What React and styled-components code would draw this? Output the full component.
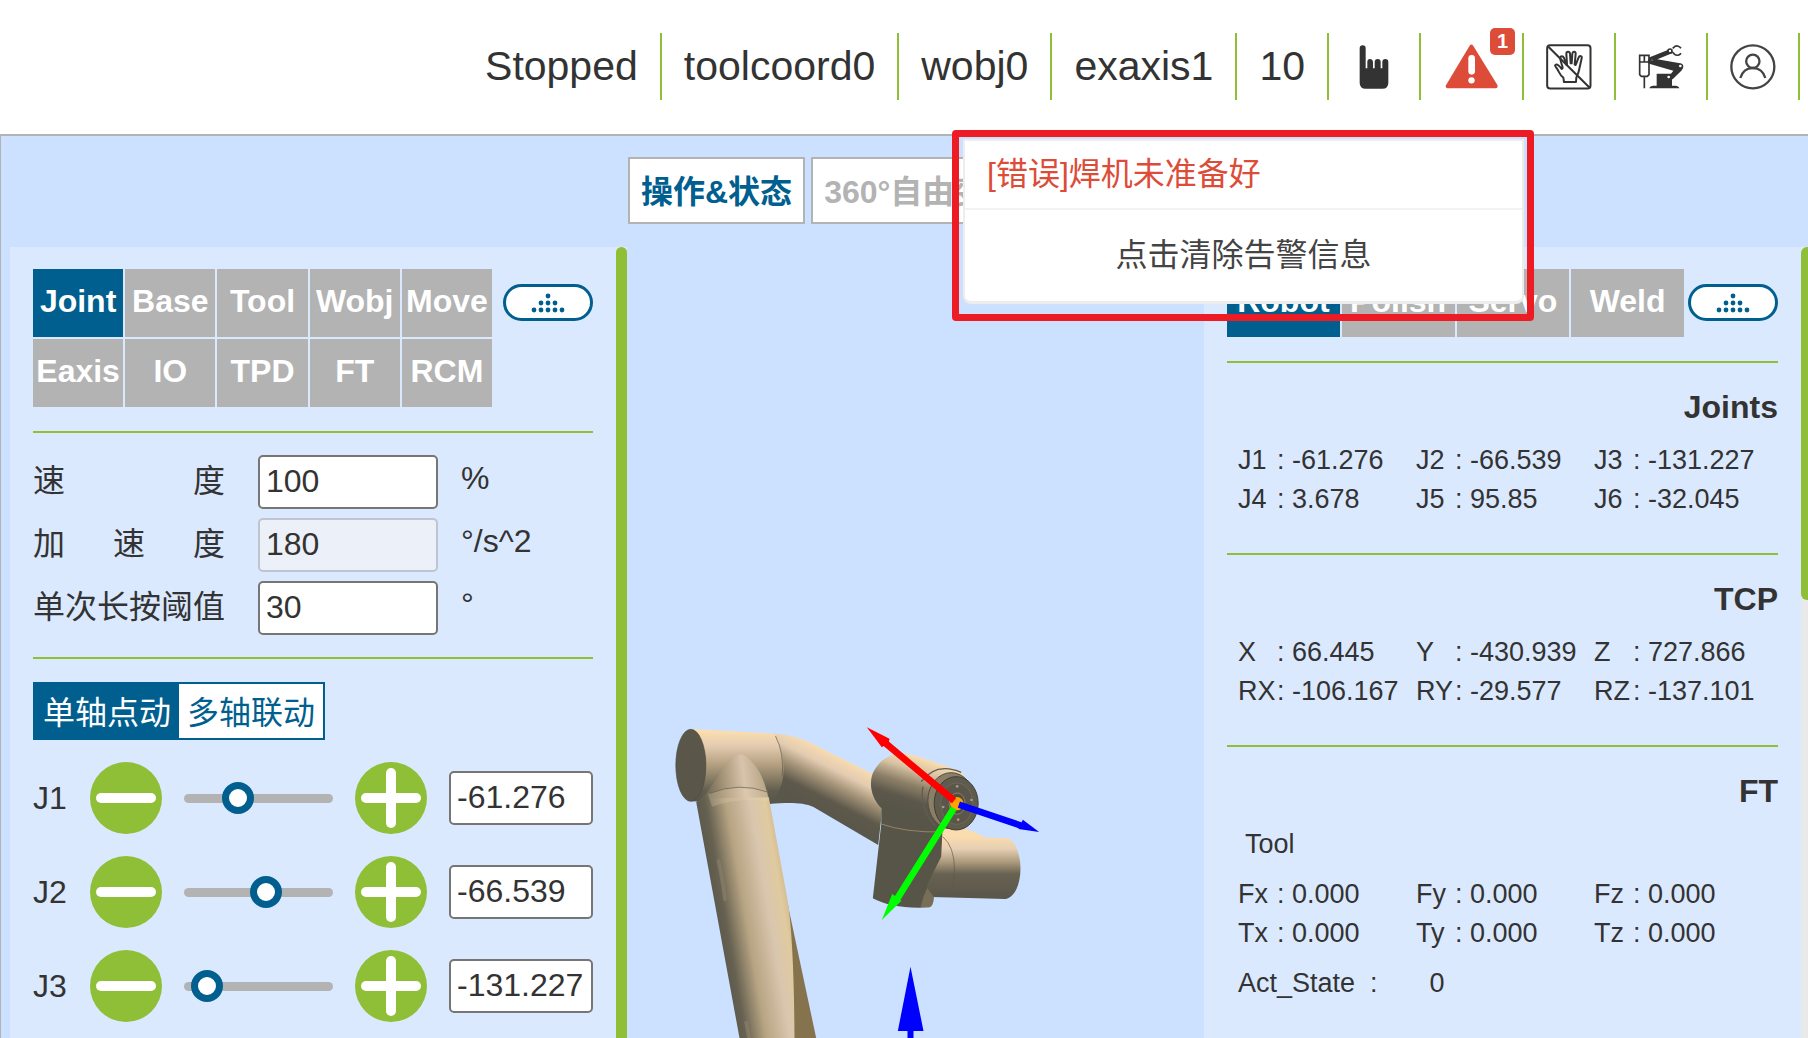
import React, { useState } from "react";
import styled, { createGlobalStyle } from "styled-components";

const GREEN = "#8fbe37";
const BLUE = "#005f8f";
const GREY = "#b3b3b3";
const TEXT = "#333333";
const ALERT = "#dd4b39";

const GlobalStyle = createGlobalStyle`
  *, *::before, *::after { box-sizing: border-box; }
  body {
    margin: 0;
    background: #ffffff;
    color: ${TEXT};
    font-family: "Liberation Sans", "Noto Sans CJK SC", sans-serif;
    font-size: 32px;
  }
  button, input { font: inherit; color: inherit; }
  button { cursor: pointer; }
`;

const Page = styled.div`
  height: 100vh;
  display: flex;
  flex-direction: column;
  overflow: hidden;
`;

const Header = styled.header`
  flex: none;
  display: flex;
  justify-content: flex-end;
  padding: 33px 8px 34px;
  font-size: 41px;
  line-height: 67px;
  white-space: nowrap;
`;

const StatusItem = styled.div`
  position: relative;
  padding: 0 22px;
  border-right: 2px solid ${GREEN};
`;

const IconButton = styled.button`
  display: flex;
  align-items: center;
  height: 67px;
  padding: 0;
  border: 0;
  background: none;
`;

const Badge = styled.span`
  position: absolute;
  top: -5px;
  right: 7px;
  width: 25px;
  height: 27px;
  border-radius: 5px;
  background: ${ALERT};
  color: #ffffff;
  font-size: 20px;
  font-weight: 700;
  line-height: 27px;
  text-align: center;
`;

const PopupAnchor = styled.div`
  position: absolute;
  z-index: 5;
  top: 106px;
  right: -2px;
  width: 561px;
`;

const Popup = styled.div`
  border: 2px solid #ededed;
  border-bottom-width: 3px;
  border-radius: 0 0 8px 8px;
  background: #ffffff;
  font-size: 32px;
`;

const AlarmText = styled.p`
  margin: 0;
  padding: 0 22px;
  border-bottom: 2px solid #f2f2f2;
  color: ${ALERT};
  line-height: 67px;
`;

const ClearButton = styled.button`
  display: block;
  width: 100%;
  height: 91px;
  padding: 0;
  border: 0;
  background: none;
  color: #444444;
`;

const Callout = styled.div`
  position: absolute;
  inset: -9px -10px -17px -11px;
  border: 7px solid #ed1c24;
  border-radius: 4px;
  pointer-events: none;
`;

const Workspace = styled.main`
  flex: 1;
  min-height: 0;
  display: grid;
  grid-template-columns: 617px minmax(0, 1fr) 604px;
  padding-left: 9px;
  border-top: 2px solid ${GREY};
  border-left: 1px solid ${GREY};
  background: #cce0ff;
`;

const Panel = styled.section`
  display: flex;
  margin-top: 111px;
  min-height: 0;
  overflow: hidden;
  background: #dbe9ff;
`;

const PanelContent = styled.div`
  flex: 1;
  min-width: 0;
  padding: 22px 23px;
`;

const ScrollTrack = styled.div`
  flex: none;
  width: ${(p) => p.$width};
  background: #e9e9e9;
`;

const ScrollThumb = styled.div`
  height: ${(p) => p.$height};
  border-radius: ${(p) => p.$radius};
  background: ${GREEN};
`;

const TabRow = styled.div`
  display: flex;
  align-items: flex-start;
  gap: ${(p) => p.$gap};
`;

const TabGrid = styled.div`
  flex: 1;
  display: grid;
  grid-template-columns: repeat(${(p) => p.$columns}, minmax(0, 1fr));
  gap: 2px;
`;

const Tab = styled.button`
  height: 68px;
  padding: 0 0 3px;
  border: 0;
  background: ${(p) => (p.$active ? BLUE : GREY)};
  color: #ffffff;
  font-weight: 700;
  white-space: nowrap;
`;

const Pill = styled.button`
  flex: none;
  display: flex;
  align-items: center;
  justify-content: center;
  width: 90px;
  height: 37px;
  margin: 15px 0;
  padding: 0;
  border: 3px solid ${BLUE};
  border-radius: 19px;
  background: #ffffff;
`;

const Rule = styled.hr`
  height: 2px;
  margin: ${(p) => p.$space} 0 0;
  border: 0;
  background: ${GREEN};
`;

const Fields = styled.div`
  display: flex;
  flex-direction: column;
  gap: 9px;
  margin-top: 22px;
`;

const Field = styled.div`
  display: grid;
  grid-template-columns: 192px 180px 1fr;
  column-gap: 33px;
  align-items: center;
`;

const FieldLabel = styled.label`
  display: flex;
  justify-content: space-between;
  padding-bottom: 2px;
  line-height: 50px;
  white-space: nowrap;
`;

const TextInput = styled.input`
  width: 100%;
  height: 54px;
  padding: 0 6px 2px;
  border: 2px solid #767676;
  border-radius: 5px;
  background: #ffffff;

  &:disabled {
    border-color: #bfc5ce;
    background: #ecf1f9;
    color: ${TEXT};
    opacity: 1;
  }
`;

const Unit = styled.span`
  margin-left: -10px;
  padding-bottom: 8px;
  line-height: 44px;
`;

const Segments = styled.div`
  display: flex;
  width: fit-content;
  margin-top: 23px;
  border: 2px solid ${BLUE};
`;

const Segment = styled.button`
  width: 144px;
  height: 54px;
  padding: 0 0 2px;
  border: 0;
  background: ${(p) => (p.$active ? BLUE : "#ffffff")};
  color: ${(p) => (p.$active ? "#ffffff" : BLUE)};
  white-space: nowrap;
`;

const JogList = styled.div`
  display: flex;
  flex-direction: column;
  gap: 22px;
  margin-top: 22px;
`;

const JogRow = styled.div`
  display: grid;
  grid-template-columns: 35px 72px minmax(0, 1fr) 72px 144px;
  column-gap: 22px;
  align-items: center;
`;

const JogButton = styled.button`
  display: flex;
  width: 72px;
  height: 72px;
  padding: 0;
  border: 0;
  border-radius: 50%;
  background: ${GREEN};
`;

const Slider = styled.input`
  appearance: none;
  width: 100%;
  height: 32px;
  margin: 0;
  background: transparent;

  &::-webkit-slider-runnable-track {
    height: 9px;
    border-radius: 5px;
    background: ${GREY};
  }
  &::-webkit-slider-thumb {
    appearance: none;
    width: 32px;
    height: 32px;
    margin-top: -12px;
    border: 7px solid ${BLUE};
    border-radius: 50%;
    background: #ffffff;
  }
`;

const Viewer = styled.section`
  display: flex;
  flex-direction: column;
  min-height: 0;
`;

const ViewTabs = styled.div`
  flex: none;
  display: flex;
  gap: 6px;
  height: 111px;
  padding: 21px 1px 0;
`;

const ViewTab = styled.button`
  flex: none;
  height: 67px;
  padding: 0 11px 4px;
  border: 2px solid ${GREY};
  background: #ffffff;
  color: ${(p) => (p.$active ? BLUE : GREY)};
  font-weight: 700;
  white-space: nowrap;
`;

const Scene = styled.svg`
  flex: 1;
  min-height: 0;
  width: 100%;
`;

const Heading = styled.h2`
  margin: 27px 0 17px;
  font-size: 32px;
  line-height: 34px;
  text-align: right;
`;

const Readings = styled.dl`
  display: grid;
  grid-template-columns: repeat(3, minmax(0, 1fr));
  margin: 0;
  padding: 0 6px 0 11px;
  font-size: 27px;
  line-height: 39px;
  white-space: nowrap;
`;

const Reading = styled.div`
  display: flex;
`;

const Term = styled.dt`
  width: 39px;
`;

const Value = styled.dd`
  margin: 0;
`;

const Caption = styled.p`
  margin: 0 0 11px;
  padding-left: 18px;
  font-size: 27px;
  line-height: 39px;
`;

const StateLine = styled.p`
  display: flex;
  gap: 52px;
  margin: 11px 0 0;
  padding-left: 11px;
  font-size: 27px;
  line-height: 39px;
  white-space: pre;
`;

const HandIcon = () => (
  <svg width="46" height="46" viewBox="872 131 138 138" aria-hidden="true">
    <path
      fill={TEXT}
      d="M898 144q0-9 9-9t9 9v60h5v-19q0-9 8-9t9 9v19h5v-19q0-9 9-9t9 9v19h5v-19q0-9 9-9t9 9v62q0 18-18 18h-50q-18 0-18-18z"
    />
  </svg>
);

const WarningIcon = () => (
  <svg width="57" height="46" viewBox="68 131 171 138" aria-hidden="true">
    <path fill={ALERT} stroke={ALERT} strokeWidth="12" strokeLinejoin="round" d="M153 139L82 257.500H226z" />
    <rect x="144" y="164" width="20" height="59" rx="10" fill="#fff" />
    <circle cx="153.500" cy="240" r="9.500" fill="#fff" />
  </svg>
);

const HandsOffIcon = () => (
  <svg width="46" height="46" viewBox="377 131 138 138" fill="none" stroke={TEXT} strokeWidth="6" aria-hidden="true">
    <rect x="380.500" y="134.500" width="130" height="130" rx="9" />
    <path
      strokeLinejoin="round"
      strokeLinecap="round"
      d="M431 245l-2-13c-10-6-14-20-19-27-4-6-8-8-5-11 5-4 12 2 19 12l3-3c-2-12-8-22-7-30 0-7 8-7 11 0l7 20 2-1-2-32c0-8 10-8 11 0l2 29h3l2-29c1-8 11-7 10 1l-3 32 3 1 9-23c3-7 11-4 9 3l-8 36c-2 10-5 14-8 22l-1 13z"
    />
    <path d="M384 139L508 262" />
  </svg>
);

const RobotIcon = () => (
  <svg width="46" height="46" viewBox="652 131 138 138" fill="none" stroke={TEXT} strokeWidth="5" aria-hidden="true">
    <path d="M657 165h28v20h-28zM671 165v20M657 185h28v38l-5 5h-18l-5-5zM671 228v36" />
    <path fill={TEXT} stroke="none" d="M687 171l60-24 7 12-44 18 64 11q14 0 14 11 0 5-6 12l-26 26h-18l20-26-70-20q-8-2-7-9zM708 220h46v38h-46zM686 264q2-8 12-8h66q10 0 12 8z" />
    <circle cx="694" cy="179" r="4" fill="#fff" />
    <circle cx="748" cy="152" r="6" fill="#fff" />
    <path d="M756 144L763 138C769 135 777 138 781 144M781 159C777 165 768 167 762 162L755 155" />
    <circle cx="779" cy="197" r="4" fill="#fff" stroke="none" />
    <circle cx="744" cy="230" r="4" fill="#fff" stroke="none" />
  </svg>
);

const UserIcon = () => (
  <svg width="46" height="46" viewBox="932 131 138 138" fill="none" stroke="#444" strokeWidth="7" aria-hidden="true">
    <circle cx="1000.500" cy="199.500" r="64.500" />
    <circle cx="1000.500" cy="183" r="20" />
    <path d="M963 233c5-18 19-30 37.500-30s32.500 12 37.500 30" />
  </svg>
);

const DotsIcon = () => (
  <svg width="34" height="20" viewBox="0 0 34 20" fill={BLUE} aria-hidden="true">
    {[[17, 3], [10, 10], [17, 10], [24, 10], [3, 17], [10, 17], [17, 17], [24, 17], [31, 17]].map(([x, y]) => (
      <circle key={`${x}-${y}`} cx={x} cy={y} r="2.400" />
    ))}
  </svg>
);

const JogIcon = ({ plus }) => (
  <svg width="72" height="72" viewBox="0 0 72 72" fill="#fff" aria-hidden="true">
    <rect x="6" y="31" width="60" height="10" rx="5" />
    {plus && <rect x="31" y="6" width="10" height="60" rx="5" />}
  </svg>
);

const RobotScene = () => (
  <Scene viewBox="628 247 576 791" preserveAspectRatio="xMidYMax meet" role="img" aria-label="Robot">
    <defs>
      <linearGradient id="tube" x1="0" y1="57" x2="0" y2="275" gradientUnits="userSpaceOnUse">
        <stop offset="0" stopColor="#ffe0ad" />
        <stop offset=".22" stopColor="#e5cdb3" />
        <stop offset=".5" stopColor="#b29e7f" />
        <stop offset=".85" stopColor="#615d4e" />
        <stop offset="1" stopColor="#59564a" />
      </linearGradient>
      <linearGradient id="forearm" x1="545" y1="130" x2="460" y2="300" gradientUnits="userSpaceOnUse">
        <stop offset="0" stopColor="#ffe0b0" />
        <stop offset=".28" stopColor="#e2cbb0" />
        <stop offset=".5" stopColor="#a39277" />
        <stop offset=".75" stopColor="#5d594b" />
        <stop offset="1" stopColor="#59564a" />
      </linearGradient>
      <linearGradient id="upper" x1="155" y1="610" x2="390" y2="570" gradientUnits="userSpaceOnUse">
        <stop offset="0" stopColor="#59564a" />
        <stop offset=".17" stopColor="#666151" />
        <stop offset=".42" stopColor="#b7a482" />
        <stop offset=".72" stopColor="#d9c6af" />
        <stop offset=".9" stopColor="#e0ca9f" />
        <stop offset="1" stopColor="#d3bb91" />
      </linearGradient>
      <linearGradient id="neck" x1="130" y1="250" x2="325" y2="225" gradientUnits="userSpaceOnUse">
        <stop offset="0" stopColor="#655f50" />
        <stop offset=".35" stopColor="#a99779" />
        <stop offset=".65" stopColor="#d8c4ab" />
        <stop offset="1" stopColor="#b5a182" />
      </linearGradient>
      <linearGradient id="head" x1="790" y1="140" x2="735" y2="310" gradientUnits="userSpaceOnUse">
        <stop offset="0" stopColor="#ffe0b0" />
        <stop offset=".25" stopColor="#d8c3a4" />
        <stop offset=".5" stopColor="#8f8169" />
        <stop offset=".75" stopColor="#5c584b" />
        <stop offset="1" stopColor="#575448" />
      </linearGradient>
      <linearGradient id="wrist" x1="0" y1="380" x2="0" y2="566" gradientUnits="userSpaceOnUse">
        <stop offset="0" stopColor="#fbdcae" />
        <stop offset=".2" stopColor="#e5ceb3" />
        <stop offset=".42" stopColor="#a99779" />
        <stop offset=".6" stopColor="#686252" />
        <stop offset="1" stopColor="#59564a" />
      </linearGradient>
    </defs>
    <g transform="translate(660 710) scale(.33333)">
      <path fill="#85734d" d="M380 560L470 984H395z" />
      <path fill="url(#forearm)" d="M345 71C400 74 440 88 500 122L640 192 668 300 656 405 462 291C430 276 380 278 330 282z" />
      <path fill="url(#tube)" d="M95 57L345 71C370 110 378 180 368 215Q360 250 336 279L200 277 95 274z" />
      <ellipse cx="94" cy="166" rx="45" ry="108" fill="#5a574a" stroke="#4b483e" strokeWidth="2" />
      <path fill="url(#neck)" d="M112 280C155 240 175 190 208 155Q240 115 272 150C302 180 318 215 330 282z" />
      <path fill="url(#upper)" d="M110 275Q140 262 160 265L328 262 386 580Q403 700 405 984H240z" />
      <path fill="#e6d2b3" opacity=".25" d="M145 252Q230 215 324 242L329 275Q240 260 158 290z" />
      <path fill="none" stroke="#5c584b" strokeWidth="2" d="M150 250Q240 215 324 246M348 78Q375 130 368 200" />
      <path fill="none" stroke="#8d806a" strokeWidth="11" strokeLinecap="round" opacity=".6" d="M177 453Q188 500 196 568M260 938L269 984" />
      <path fill="url(#wrist)" d="M835 362Q900 335 975 382L1045 385C1065 390 1083 430 1083 475 1083 525 1065 562 1038 567L790 560z" />
      <path fill="#575448" d="M668 240L665 345 640 565Q700 598 810 592 822 588 823 560L800 530 845 440 850 340z" />
      <path fill="#9a8768" opacity=".5" d="M803 534Q790 560 783 592L810 592Q822 588 823 560z" />
      <path fill="url(#head)" d="M725 130Q760 131 905 185L950 260 880 358Q800 350 770 325L668 297C630 260 630 215 640 190 655 155 690 130 725 130z" />
      <path fill="none" stroke="#b79c70" strokeWidth="2" d="M665 342Q740 368 850 366" />
      <path fill="none" stroke="#5d594c" strokeWidth="2" d="M850 380Q885 410 885 480T850 560" />
      <path fill="none" stroke="#625d4e" strokeWidth="4" d="M785 215Q830 155 905 187M790 230Q780 300 830 350" />
      <ellipse cx="875" cy="272" rx="70" ry="84" fill="#8b7e67" stroke="#4f4c41" strokeWidth="3" />
      <ellipse cx="890" cy="280" rx="66" ry="80" fill="#5f5b4d" stroke="#3f3d35" strokeWidth="3" />
      <ellipse cx="892" cy="281" rx="48" ry="62" fill="#5a574a" stroke="#777060" strokeWidth="2" />
      <ellipse cx="893" cy="281" rx="24" ry="32" fill="#514f44" stroke="#8a806c" strokeWidth="3" />
      <g fill="#a99a80">
        <circle cx="893" cy="229" r="4" />
        <circle cx="936" cy="270" r="4" />
        <circle cx="851" cy="291" r="4" />
        <circle cx="896" cy="329" r="4" />
      </g>
      <circle cx="892" cy="281" r="20" fill="#ffa500" />
      <path stroke="#f00" strokeWidth="20" d="M884 272L676 98" />
      <path fill="#f00" d="M622 52L690 86 688 97 667 112z" />
      <path stroke="#0f0" strokeWidth="20" d="M883 295L712 568" />
      <path fill="#0f0" d="M667 630L698 552 726 572z" />
      <path stroke="#00f" strokeWidth="20" d="M898 284L1085 347" />
      <path fill="#00f" d="M1139 366L1090 329 1077 357z" />
      <path fill="#00f" d="M753 770L715 963H744V984H762V963H792z" />
    </g>
  </Scene>
);

const LEFT_TABS = ["Joint", "Base", "Tool", "Wobj", "Move", "Eaxis", "IO", "TPD", "FT", "RCM"];
const RIGHT_TABS = ["Robot", "Polish", "Servo", "Weld"];

const FIELDS = [
  { id: "speed", label: "速度", value: "100", unit: "%" },
  { id: "acceleration", label: "加速度", value: "180", unit: "°/s^2", disabled: true },
  { id: "threshold", label: "单次长按阈值", value: "30", unit: "°" },
];

const JOINTS = [
  { name: "J1", value: "-61.276", min: -175, max: 175 },
  { name: "J2", value: "-66.539", min: -265, max: 85 },
  { name: "J3", value: "-131.227", min: -150, max: 150 },
];

const JOINT_READINGS = [["J1", "-61.276"], ["J2", "-66.539"], ["J3", "-131.227"], ["J4", "3.678"], ["J5", "95.85"], ["J6", "-32.045"]];
const TCP_READINGS = [["X", "66.445"], ["Y", "-430.939"], ["Z", "727.866"], ["RX", "-106.167"], ["RY", "-29.577"], ["RZ", "-137.101"]];
const FT_READINGS = [["Fx", "0.000"], ["Fy", "0.000"], ["Fz", "0.000"], ["Tx", "0.000"], ["Ty", "0.000"], ["Tz", "0.000"]];

function ReadingGrid({ items }) {
  return (
    <Readings>
      {items.map(([name, value]) => (
        <Reading key={name}>
          <Term>{name}</Term>
          <Value>: {value}</Value>
        </Reading>
      ))}
    </Readings>
  );
}

function TabBar({ names, columns, gap }) {
  const [active, setActive] = useState(names[0]);
  return (
    <TabRow $gap={gap}>
      <TabGrid $columns={columns}>
        {names.map((name) => (
          <Tab key={name} $active={name === active} onClick={() => setActive(name)}>
            {name}
          </Tab>
        ))}
      </TabGrid>
      <Pill aria-label="Collapse">
        <DotsIcon />
      </Pill>
    </TabRow>
  );
}

function Joint({ name, value, min, max }) {
  return (
    <JogRow>
      <label htmlFor={name}>{name}</label>
      <JogButton aria-label={`${name} -`}>
        <JogIcon />
      </JogButton>
      <Slider type="range" min={min} max={max} step="0.001" defaultValue={value} aria-label={name} />
      <JogButton aria-label={`${name} +`}>
        <JogIcon plus />
      </JogButton>
      <TextInput id={name} defaultValue={value} />
    </JogRow>
  );
}

export default function App() {
  return (
    <Page>
      <GlobalStyle />
      <Header>
        {["Stopped", "toolcoord0", "wobj0", "exaxis1", "10"].map((text) => (
          <StatusItem key={text}>{text}</StatusItem>
        ))}
        <StatusItem>
          <IconButton aria-label="Manual mode"><HandIcon /></IconButton>
        </StatusItem>
        <StatusItem>
          <IconButton aria-label="Alarms"><WarningIcon /></IconButton>
          <Badge>1</Badge>
          <PopupAnchor>
            <Popup>
              <AlarmText>[错误]焊机未准备好</AlarmText>
              <ClearButton>点击清除告警信息</ClearButton>
            </Popup>
            <Callout />
          </PopupAnchor>
        </StatusItem>
        <StatusItem>
          <IconButton aria-label="Drag mode"><HandsOffIcon /></IconButton>
        </StatusItem>
        <StatusItem>
          <IconButton aria-label="Robot"><RobotIcon /></IconButton>
        </StatusItem>
        <StatusItem>
          <IconButton aria-label="User"><UserIcon /></IconButton>
        </StatusItem>
      </Header>

      <Workspace>
        <Panel>
          <PanelContent>
            <TabBar names={LEFT_TABS} columns={5} gap="11px" />
            <Rule $space="24px" />
            <Fields>
              {FIELDS.map((field) => (
                <Field key={field.id}>
                  <FieldLabel htmlFor={field.id}>
                    {[...field.label].map((char) => <span key={char}>{char}</span>)}
                  </FieldLabel>
                  <TextInput id={field.id} defaultValue={field.value} disabled={field.disabled} />
                  <Unit>{field.unit}</Unit>
                </Field>
              ))}
            </Fields>
            <Rule $space="22px" />
            <Segments>
              <Segment $active>单轴点动</Segment>
              <Segment>多轴联动</Segment>
            </Segments>
            <JogList>
              {JOINTS.map((joint) => <Joint key={joint.name} {...joint} />)}
            </JogList>
          </PanelContent>
          <ScrollTrack $width="11px">
            <ScrollThumb $height="100%" $radius="6px 6px 0 0" />
          </ScrollTrack>
        </Panel>

        <Viewer>
          <ViewTabs>
            <ViewTab $active>操作&amp;状态</ViewTab>
            <ViewTab>360°自由变换</ViewTab>
          </ViewTabs>
          <RobotScene />
        </Viewer>

        <Panel>
          <PanelContent>
            <TabBar names={RIGHT_TABS} columns={4} gap="4px" />
            <Rule $space="24px" />
            <Heading>Joints</Heading>
            <ReadingGrid items={JOINT_READINGS} />
            <Rule $space="34px" />
            <Heading>TCP</Heading>
            <ReadingGrid items={TCP_READINGS} />
            <Rule $space="34px" />
            <Heading>FT</Heading>
            <Caption>Tool</Caption>
            <ReadingGrid items={FT_READINGS} />
            <StateLine>
              <span>Act_State  :</span>
              <span>0</span>
            </StateLine>
          </PanelContent>
          <ScrollTrack $width="7px">
            <ScrollThumb $height="353px" $radius="6px 0 0 6px" />
          </ScrollTrack>
        </Panel>
      </Workspace>
    </Page>
  );
}
